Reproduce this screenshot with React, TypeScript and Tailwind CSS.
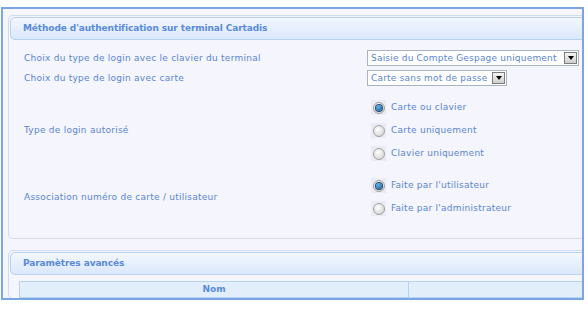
import React from "react";

const font = { fontFamily: '"DejaVu Sans", Verdana, sans-serif' };

function Select({ text, width }: { text: string; width: string }) {
  return (
    <div className={`flex h-[16px] items-center border border-[#a9b3c2] bg-white ${width}`}>
      <span className="flex-1 truncate pl-[3px] text-[9px] leading-none tracking-[0.2px] text-[#5b86d0]">{text}</span>
      <span className="m-[1px] flex h-[12px] w-[13px] items-center justify-center border border-[#7c7c7c] bg-gradient-to-b from-[#f4f4f4] to-[#cfcfcf]">
        <span className="h-0 w-0 border-x-[3px] border-t-[4px] border-x-transparent border-t-black" />
      </span>
    </div>
  );
}

function Radio({ label, checked }: { label: string; checked?: boolean }) {
  return (
    <div className="flex h-[23px] items-center">
      <span className="flex h-[15px] w-[15px] items-center justify-center bg-[#eaebf4]">
        <span className="flex h-[12px] w-[12px] items-center justify-center rounded-full border border-[#a3a3a3] bg-[radial-gradient(circle_at_40%_35%,#ffffff,#cbcbcb)]">
          {checked && (
            <span className="h-[6px] w-[6px] rounded-full bg-[radial-gradient(circle_at_40%_35%,#5fb7f0,#0b4f8f)] shadow-[0_0_0_1px_#2a4a6a]" />
          )}
        </span>
      </span>
      <span className="ml-[5px] text-[9px] leading-none tracking-[0.25px] text-[#5b86d0]">{label}</span>
    </div>
  );
}

function Header({ title }: { title: string }) {
  return (
    <div className="mx-[1px] mt-[1px] flex h-[23px] items-center rounded-[5px] border border-[#b9d0ee] bg-gradient-to-b from-[#f3f7fe] to-[#dae8fb] pl-[12px]">
      <span className="text-[9px] font-bold leading-none tracking-[-0.1px] text-[#5a8ad8]">{title}</span>
    </div>
  );
}

const label = "text-[9px] leading-none tracking-[0.25px] text-[#5b86d0]";

export default function App() {
  return (
    <div className="h-[309px] w-[588px] bg-white pt-[7px] pl-[1px]" style={font}>
      <div className="h-[293px] w-[583px] overflow-hidden border-2 border-[#79a6e6] bg-[#f4f5fd] pl-[5px] pt-[6px]">
        <div className="w-[600px] rounded-[5px] border border-[#cfdcee] border-b-[#d9dce4] bg-[#f4f5fd] pb-[10px]">
          <Header title="Méthode d'authentification sur terminal Cartadis" />
          <div className="pl-[15px] pt-[8px]">
            <div className="flex h-[20px] items-center">
              <span className={`w-[343px] ${label}`}>Choix du type de login avec le clavier du terminal</span>
              <Select text="Saisie du Compte Gespage uniquement" width="w-[212px]" />
            </div>
            <div className="flex h-[20px] items-center">
              <span className={`w-[343px] ${label}`}>Choix du type de login avec carte</span>
              <Select text="Carte sans mot de passe" width="w-[140px]" />
            </div>
            <div className="mt-[8px] flex items-center">
              <span className={`w-[347px] ${label}`}>Type de login autorisé</span>
              <div className="flex flex-col">
                <Radio label="Carte ou clavier" checked />
                <Radio label="Carte uniquement" />
                <Radio label="Clavier uniquement" />
              </div>
            </div>
            <div className="mt-[9px] flex items-center">
              <span className={`w-[347px] ${label}`}>Association numéro de carte / utilisateur</span>
              <div className="flex flex-col">
                <Radio label="Faite par l'utilisateur" checked />
                <Radio label="Faite par l'administrateur" />
              </div>
            </div>
          </div>
          <div className="h-[8px]" />
        </div>

        <div className="mt-[11px] w-[600px] rounded-[5px] border border-[#cfdcee] bg-[#f4f5fd]">
          <Header title="Paramètres avancés" />
          <div className="ml-[10px] mt-[6px] flex h-[17px] border border-[#b5d2f0] bg-[#e3eefb]">
            <div className="flex w-[389px] items-center justify-center border-r border-[#b5d2f0]">
              <span className="text-[9px] font-bold leading-none text-[#5a8ad8]">Nom</span>
            </div>
            <div className="flex-1" />
          </div>
        </div>
      </div>
    </div>
  );
}
